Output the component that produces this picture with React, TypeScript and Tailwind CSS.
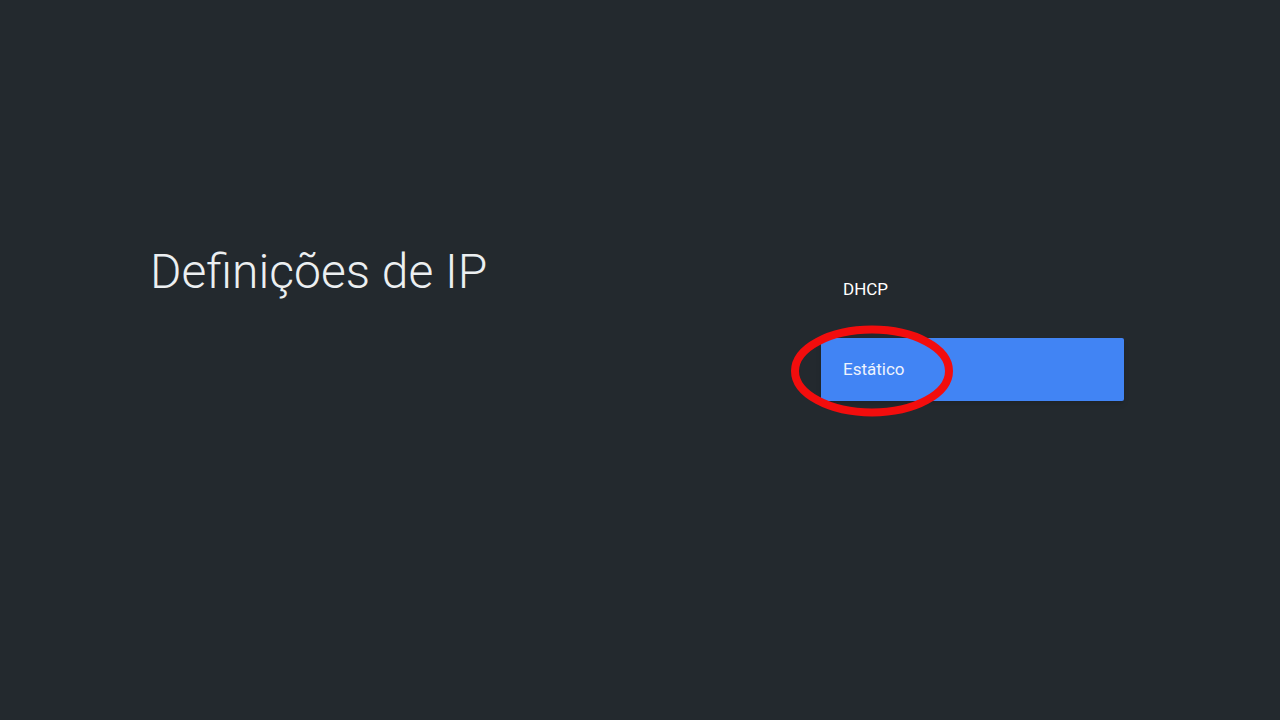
import React from 'react';

export default function App() {
  return (
    <div className="w-[1280px] h-[720px] bg-[#23292e] overflow-hidden flex" style={{ fontFamily: 'Roboto, "Noto Sans", sans-serif' }}>
      {/* Left: title */}
      <div className="w-[821px] pl-[150px] pt-[248px]">
        <h1 className="text-[48px] leading-none font-light text-[#eceff1]">Definições de IP</h1>
      </div>

      {/* Right: options */}
      <div className="w-[303px] pt-[281px] flex flex-col">
        <div className="pl-[22px] text-[17px] leading-none text-white">DHCP</div>
        <div className="relative mt-[40px]">
          <div className="h-[63px] bg-[#4184f4] rounded-[2px] shadow-md flex items-center pl-[22px] text-[17px] text-[#eef3fd]">
            Estático
          </div>
          <svg className="absolute left-[-34px] top-[-14px] pointer-events-none" width="170" height="94" viewBox="0 0 170 94">
            <ellipse cx="85" cy="47" rx="77" ry="41.5" fill="none" stroke="#f20d0d" strokeWidth="8" />
          </svg>
        </div>
      </div>
    </div>
  );
}
